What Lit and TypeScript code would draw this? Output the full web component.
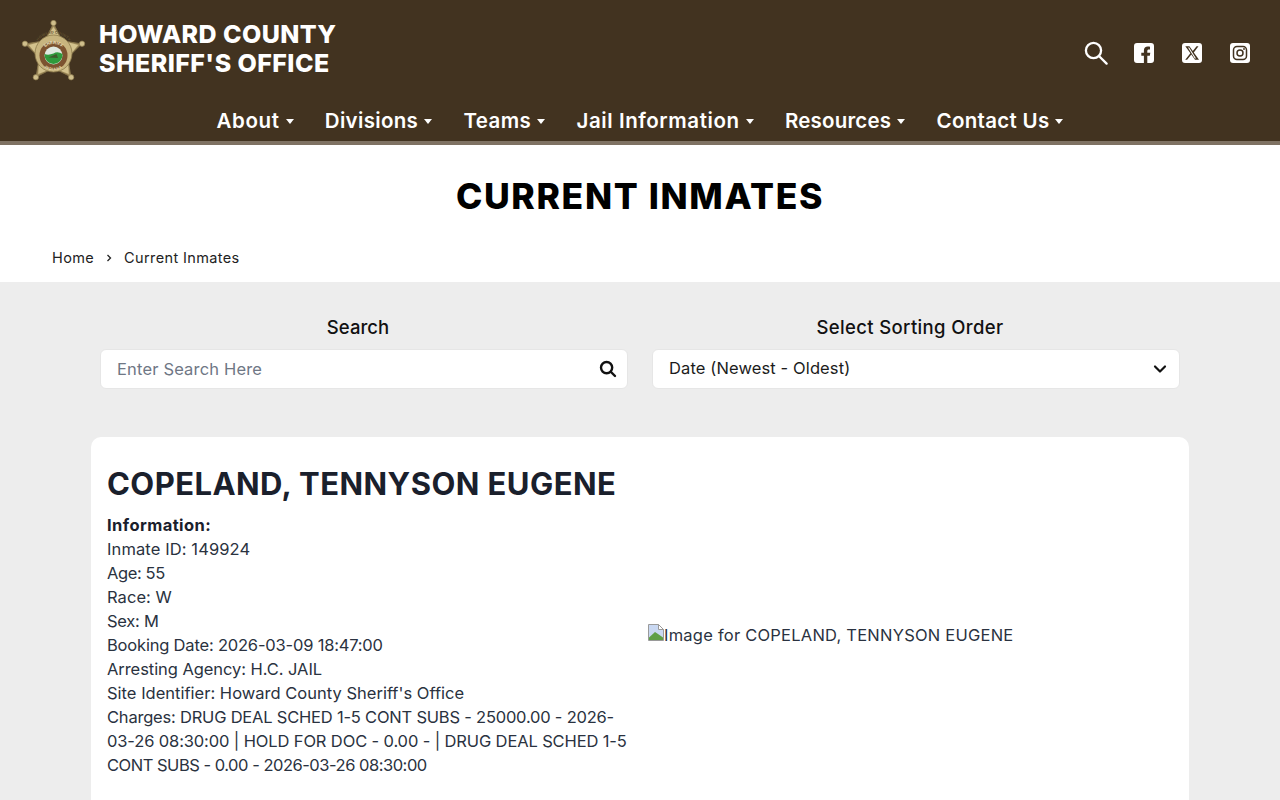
import { LitElement, html, css, svg } from "lit";
import { customElement } from "lit/decorators.js";

const NAV: [string, number][] = [
  ["About", 0.6],
  ["Divisions", 0.31],
  ["Teams", 0.4],
  ["Jail Information", 0.575],
  ["Resources", 0.2],
  ["Contact Us", 0.3],
];
const LINES: [string, number][] = [
  ["Inmate ID: 149924", 0.11],
  ["Age: 55", -0.38],
  ["Race: W", 0.05],
  ["Sex: M", -0.25],
  ["Booking Date: 2026-03-09 18:47:00", -0.19],
  ["Arresting Agency: H.C. JAIL", -0.06],
  ["Site Identifier: Howard County Sheriff's Office", 0.01],
  ["Charges: DRUG DEAL SCHED 1-5 CONT SUBS - 25000.00 - 2026-", -0.21],
  ["03-26 08:30:00 | HOLD FOR DOC - 0.00 - | DRUG DEAL SCHED 1-5", -0.13],
  ["CONT SUBS - 0.00 - 2026-03-26 08:30:00", -0.48],
];
const starPts = (cx: number, cy: number, R: number, r: number) => {
  const p: string[] = [];
  for (let i = 0; i < 10; i++) {
    const a = -Math.PI / 2 + (i * Math.PI) / 5;
    const q = i % 2 ? r : R;
    p.push(`${(cx + q * Math.cos(a)).toFixed(2)},${(cy + q * Math.sin(a)).toFixed(2)}`);
  }
  return p.join(" ");
};
const tips = [0, 1, 2, 3, 4].map((i) => {
  const a = -Math.PI / 2 + (i * 2 * Math.PI) / 5;
  return [32 + 30 * Math.cos(a), 33 + 30 * Math.sin(a)];
});

const badge = html`<svg class="badge" viewBox="0 0 64 64" width="65" height="64" aria-label="Howard County Sheriff badge">
  <defs>
    <path id="arcOuter" d="M13.500 33 A18.500 18.500 0 0 1 50.500 33"></path>
    <path id="arcTop" d="M20 36 A12 12 0 0 1 44 36"></path>
    <path id="arcBot" d="M20.500 36 A11.500 11.500 0 0 0 43.500 36"></path>
  </defs>
  <polygon points="${starPts(32, 33, 29.500, 15)}" fill="#a08c5c" stroke="#86744a" stroke-width="1" stroke-linejoin="round"></polygon>
  <polygon points="${starPts(32, 33, 26, 15)}" fill="#d3c28d"></polygon>
  ${tips.map(([x, y]) => svg`<circle cx="${x}" cy="${y}" r="2.700" fill="#d0bf8c" stroke="#8a784c" stroke-width=".7"></circle>`)}
  <circle cx="32" cy="33.500" r="18.500" fill="#c8b57f" stroke="#8a784a" stroke-width=".8"></circle>
  <text font-size="3.700" font-family="Liberation Sans, sans-serif" font-weight="700" fill="#5f4f2e" dy="-1"><textPath href="#arcOuter" startOffset="50%" text-anchor="middle">HOWARD COUNTY</textPath></text>
  <circle cx="32" cy="35.500" r="14" fill="#7c5330"></circle>
  <circle cx="32" cy="35.500" r="9" fill="#dfe9e0"></circle>
  <path d="M23 35 A9 9 0 0 0 41 35 L41 34 Q36 31 32 33.500 Q27 35.500 23 34 Z" fill="#2f9a3c"></path>
  <path d="M27 37.500 L35 34 L36.500 38 Z" fill="#3f5a2c"></path>
  <text font-size="4.300" font-family="Liberation Sans, sans-serif" font-weight="700" fill="#efe5c2"><textPath href="#arcTop" startOffset="50%" text-anchor="middle">SHERIFF</textPath></text>
  <text font-size="3.600" font-family="Liberation Sans, sans-serif" font-weight="700" fill="#efe5c2" dy="2.800"><textPath href="#arcBot" startOffset="50%" text-anchor="middle">INDIANA</textPath></text>
</svg>`;

@customElement("app-root")
export class AppRoot extends LitElement {
  static styles = css`
    :host { display: block; font-family: Inter, "Noto Sans", sans-serif; background: #fff; color: #1a202c; }
    * { box-sizing: border-box; }
    .hdr { background: #423320; border-bottom: 4px solid #7f7263; height: 145px; color: #fff; display: flex; flex-direction: column; }
    .top { display: flex; justify-content: space-between; align-items: center; padding: 20px 30px 0 21px; height: 83px; }
    .brand { display: flex; align-items: center; gap: 13px; }
    .badge { display: block; }
    .name { font-size: 25px; font-weight: 800; line-height: 29px; margin-top: -6px; letter-spacing: .42px; position: relative; top: .5px; }
    .icons { display: flex; align-items: center; gap: 28px; margin-top: 3px; }
    .icons svg { display: block; }
    .icons .find { margin-right: -2px; }
    .nav { display: flex; justify-content: center; gap: 31.3px; height: 38px; align-items: center; margin-top: 18px; }
    .nav a { display: flex; align-items: center; gap: 6px; font-size: 20.5px; font-weight: 600; }
    .caret { width: 0; height: 0; border-left: 4px solid transparent; border-right: 4px solid transparent; border-top: 5px solid #fff; margin-top: 2px; }
    h1 { margin: 0; font-size: 35.5px; font-weight: 800; line-height: 44px; text-align: center; color: #000; padding-top: 30px; letter-spacing: 1.62px; }
    .crumbs { display: flex; align-items: center; height: 63px; padding: 13px 0 0 52px; font-size: 14.5px; color: #222; letter-spacing: .37px; }
    .crumbs .home { margin-top: 1px; }
    .crumbs .sep { width: 30px; display: flex; justify-content: center; margin-top: 1px; }
    .main { background: #ededed; padding-bottom: 40px; }
    .filters { display: grid; grid-template-columns: 528px 528px; gap: 24px; padding: 33px 100px 0; }
    .field label { display: block; text-align: center; padding-right: 12px; font-size: 18.5px; font-weight: 500; line-height: 24px; color: #111; margin-bottom: 10px; letter-spacing: .05px; }
    .field label.wide { letter-spacing: .36px; }
    .box { height: 40px; background: #fff; border: 1px solid #e6e6e6; border-radius: 6px; display: flex; align-items: center; justify-content: space-between; padding: 0 10px 0 16px; font-size: 16.5px; letter-spacing: .17px; }
    .box.sel { padding-right: 12px; }
    .ph { color: #6f7785; }
    .val { color: #1c1c1c; margin-top: -2px; letter-spacing: .12px; }
    .card { margin: 48px 91px 0; background: #fff; border-radius: 10px; padding: 16px; display: grid; grid-template-columns: 525px 525px; gap: 16px; align-items: center; }
    h2 { margin: 13px 0 11px; font-size: 31px; line-height: 36px; font-weight: 700; color: #1a202c; letter-spacing: .43px; white-space: nowrap; }
    .info { font-size: 16.5px; line-height: 24px; color: #2a3240; padding-bottom: 40px; }
    .info b { font-weight: 700; color: #1a202c; display: block; letter-spacing: .42px; }
    .info span { display: block; white-space: nowrap; }
    .alt { display: flex; align-items: center; font-size: 16.5px; color: #2a3240; letter-spacing: .23px; }
    .alt svg { display: block; flex: none; margin-top: -5px; }
  `;

  render() {
    return html`
      <header class="hdr">
        <div class="top">
          <div class="brand">${badge}<div class="name">HOWARD COUNTY<br />SHERIFF'S OFFICE</div></div>
          <div class="icons">
            <svg class="find" width="24" height="24" viewBox="0 0 24 24" fill="none" stroke="#fff" stroke-width="2.300" stroke-linecap="round"><circle cx="9.500" cy="9.500" r="7.600"></circle><path d="M15.200 15.200 22.600 22.600"></path></svg>
            <svg width="20" height="20" viewBox="0 0 20 20"><path fill="#fff" fill-rule="evenodd" d="M3 0h14a3 3 0 0 1 3 3v14a3 3 0 0 1-3 3h-3.700v-7.300h2.500l.5-3h-3V7.900c0-.9.4-1.500 1.600-1.500H16V3.800c-.5-.1-1.300-.2-2.200-.2-2.400 0-3.900 1.400-3.900 3.900v2.200H7.300v3h2.600V20H3a3 3 0 0 1-3-3V3a3 3 0 0 1 3-3z"></path></svg>
            <svg width="20" height="20" viewBox="0 0 20 20"><path fill="#fff" fill-rule="evenodd" d="M3 0h14a3 3 0 0 1 3 3v14a3 3 0 0 1-3 3H3a3 3 0 0 1-3-3V3a3 3 0 0 1 3-3zM3.300 3.300l5.100 7-5.200 6.400h1.900l4.200-5.100 3.700 5.100h4L11.800 9.400l4.700-6.100h-1.900l-3.800 4.700-3.400-4.700zM6 4.600h1.200l6.800 10.800h-1.200z"></path></svg>
            <svg width="20" height="20" viewBox="0 0 20 20"><path fill="#fff" d="M3 0h14a3 3 0 0 1 3 3v14a3 3 0 0 1-3 3H3a3 3 0 0 1-3-3V3a3 3 0 0 1 3-3z"></path><rect x="3.500" y="3.500" width="13" height="13" rx="3.500" fill="none" stroke="#423320" stroke-width="1.500"></rect><circle cx="10" cy="10" r="3" fill="none" stroke="#423320" stroke-width="1.500"></circle><circle cx="14" cy="6" r=".9" fill="#423320"></circle></svg>
          </div>
        </div>
        <nav class="nav">${NAV.map(([n, ls]) => html`<a style="letter-spacing:${ls}px">${n}<span class="caret"></span></a>`)}</nav>
      </header>
      <h1>CURRENT INMATES</h1>
      <div class="crumbs">
        <span class="home">Home</span>
        <span class="sep"><svg width="6" height="8" viewBox="0 0 6 8" fill="none" stroke="#222" stroke-width="1.300"><path d="M1.500 1 4.500 4 1.500 7"></path></svg></span>
        <span>Current Inmates</span>
      </div>
      <main class="main">
        <div class="filters">
          <div class="field">
            <label>Search</label>
            <div class="box"><span class="ph">Enter Search Here</span>
              <svg width="18" height="18" viewBox="0 0 18 18" fill="none" stroke="#111" stroke-width="2.400" stroke-linecap="round"><circle cx="7.600" cy="7.600" r="5.600"></circle><path d="M12 12 16 16"></path></svg>
            </div>
          </div>
          <div class="field">
            <label class="wide">Select Sorting Order</label>
            <div class="box sel"><span class="val">Date (Newest - Oldest)</span>
              <svg width="14" height="10" viewBox="0 0 14 10" fill="none" stroke="#111" stroke-width="2.200" stroke-linecap="round" stroke-linejoin="round"><path d="M2 2.500 7 7.500 12 2.500"></path></svg>
            </div>
          </div>
        </div>
        <section class="card">
          <div>
            <h2>COPELAND, TENNYSON EUGENE</h2>
            <div class="info">
              <b>Information:</b>
              ${LINES.map(([l, ls]) => html`<span style="letter-spacing:${ls}px">${l}</span>`)}
            </div>
          </div>
          <div class="alt">
            <svg width="16" height="17" viewBox="0 0 16 17"><path d="M.5.500h10l5 5v11H.5z" fill="#c9d8f2" stroke="#9a9a9a"></path><path d="M10.500.500v5h5z" fill="#fff" stroke="#9a9a9a"></path><path d="M1 16V13.500L7 8l3 2 5 3.500V16z" fill="#5f9f46"></path></svg>
            <span>Image for COPELAND, TENNYSON EUGENE</span>
          </div>
        </section>
      </main>
    `;
  }
}
